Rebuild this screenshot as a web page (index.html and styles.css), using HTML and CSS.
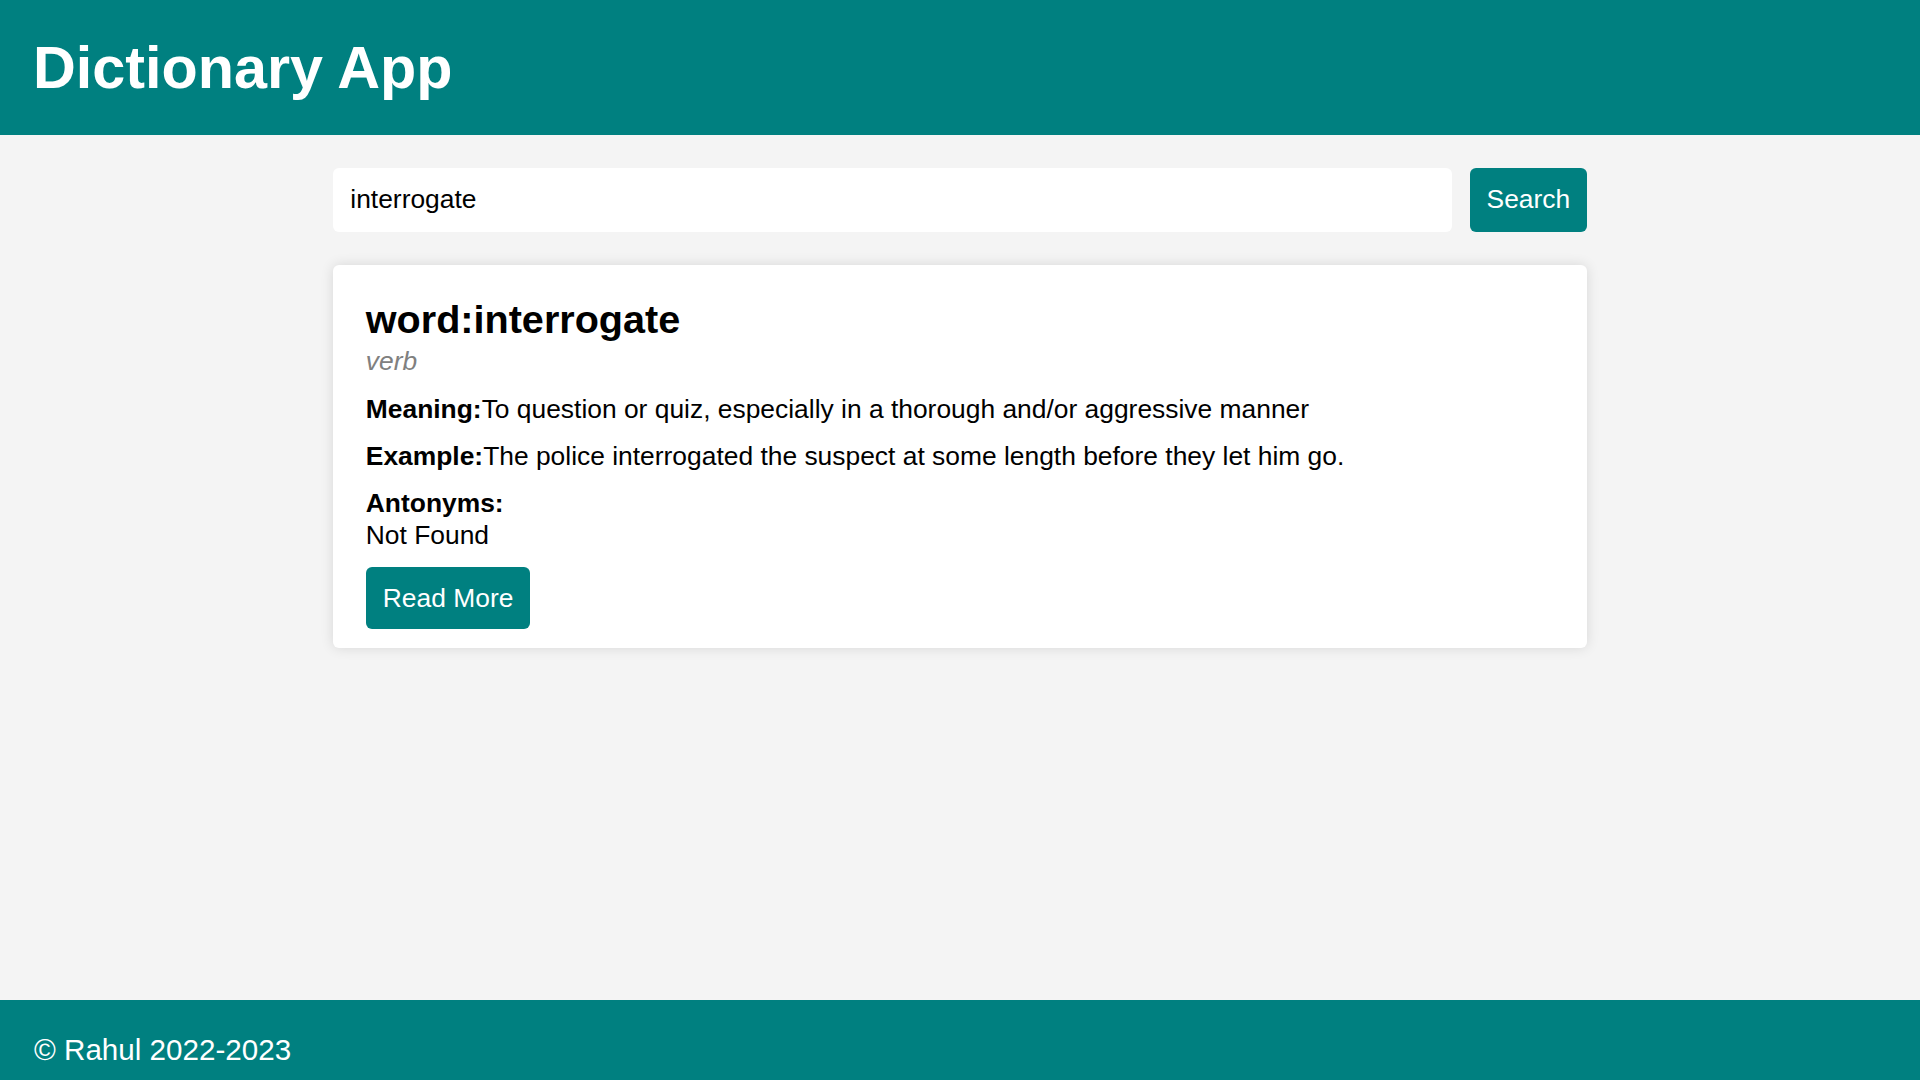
FILE: index.html
```html
<!DOCTYPE html>
<html lang="en">
<head>
<meta charset="utf-8">
<title>Dictionary App</title>
<link rel="stylesheet" href="styles.css">
</head>
<body>
  <header class="site-header">
    <h1 class="site-title">Dictionary App</h1>
  </header>
  <main class="main">
    <div class="container">
      <form class="search-row" onsubmit="return false;">
        <input class="search-input" type="text" value="interrogate">
        <button class="btn search-btn" type="submit">Search</button>
      </form>
      <section class="card">
        <h2 class="word">word:interrogate</h2>
        <p class="pos">verb</p>
        <p class="row meaning"><strong>Meaning:</strong>To question or quiz, especially in a thorough and/or aggressive manner</p>
        <p class="row example"><strong>Example:</strong>The police interrogated the suspect at some length before they let him go.</p>
        <div class="antonyms">
          <strong class="ant-label">Antonyms:</strong>
          <div class="ant-value">Not Found</div>
        </div>
        <button class="btn read-more" type="button">Read More</button>
      </section>
    </div>
  </main>
  <footer class="site-footer">
    <p class="copy">© Rahul 2022-2023</p>
  </footer>
</body>
</html>
```

FILE: styles.css
```css
* {
  box-sizing: border-box;
}

html, body {
  margin: 0;
  padding: 0;
}

body {
  min-height: 100vh;
  display: flex;
  flex-direction: column;
  background: #f4f4f4;
  color: #000;
  font-family: "Liberation Sans", Arial, sans-serif;
  font-size: 26.4px;
  line-height: 30.4px;
}

.site-header {
  height: 135px;
  background: #008080;
  display: flex;
  align-items: center;
  padding-left: 33px;
}

.site-title {
  margin: 0;
  color: #fff;
  font-size: 59.3px;
  line-height: 67.6px;
  font-weight: 700;
}

.main {
  flex: 1;
  padding-top: 32.7px;
}

.container {
  width: 1253.4px;
  margin: 0 auto;
}

.search-row {
  display: flex;
  gap: 18.5px;
  margin: 0;
  height: 64px;
}

.search-input {
  flex: 1;
  height: 64px;
  border: none;
  outline: none;
  border-radius: 6px;
  background: #fff;
  padding: 0 17px;
  font-family: inherit;
  font-size: 26.4px;
  color: #000;
}

.btn {
  border: none;
  border-radius: 6px;
  background: #008080;
  color: #fff;
  font-family: inherit;
  font-size: 26.4px;
  line-height: 30.4px;
  cursor: pointer;
}

.search-btn {
  height: 64px;
  padding: 0 16.5px;
}

.card {
  margin-top: 33.3px;
  background: #fff;
  border-radius: 6px;
  box-shadow: 0 0 13px rgba(0, 0, 0, 0.12);
  padding: 31.8px 32.5px 18.4px;
}

.word {
  margin: 0;
  font-size: 39.6px;
  line-height: 45.5px;
  font-weight: 700;
}

.pos {
  margin: 3.3px 0 0;
  color: #808080;
  font-style: italic;
}

.row {
  margin: 16.2px 0 0;
}

.meaning {
  margin-top: 18px;
}

.antonyms {
  margin-top: 17.3px;
}

.ant-label {
  display: block;
}

.ant-value {
  margin-top: 1px;
}

.read-more {
  display: block;
  width: fit-content;
  margin-top: 17.3px;
  padding: 15.8px 17px;
}

.site-footer {
  height: 80px;
  background: #008080;
  color: #fff;
  padding: 32.7px 0 0 34px;
  overflow: hidden;
}

.copy {
  margin: 0;
  font-size: 29.6px;
  line-height: 34px;
}
```
